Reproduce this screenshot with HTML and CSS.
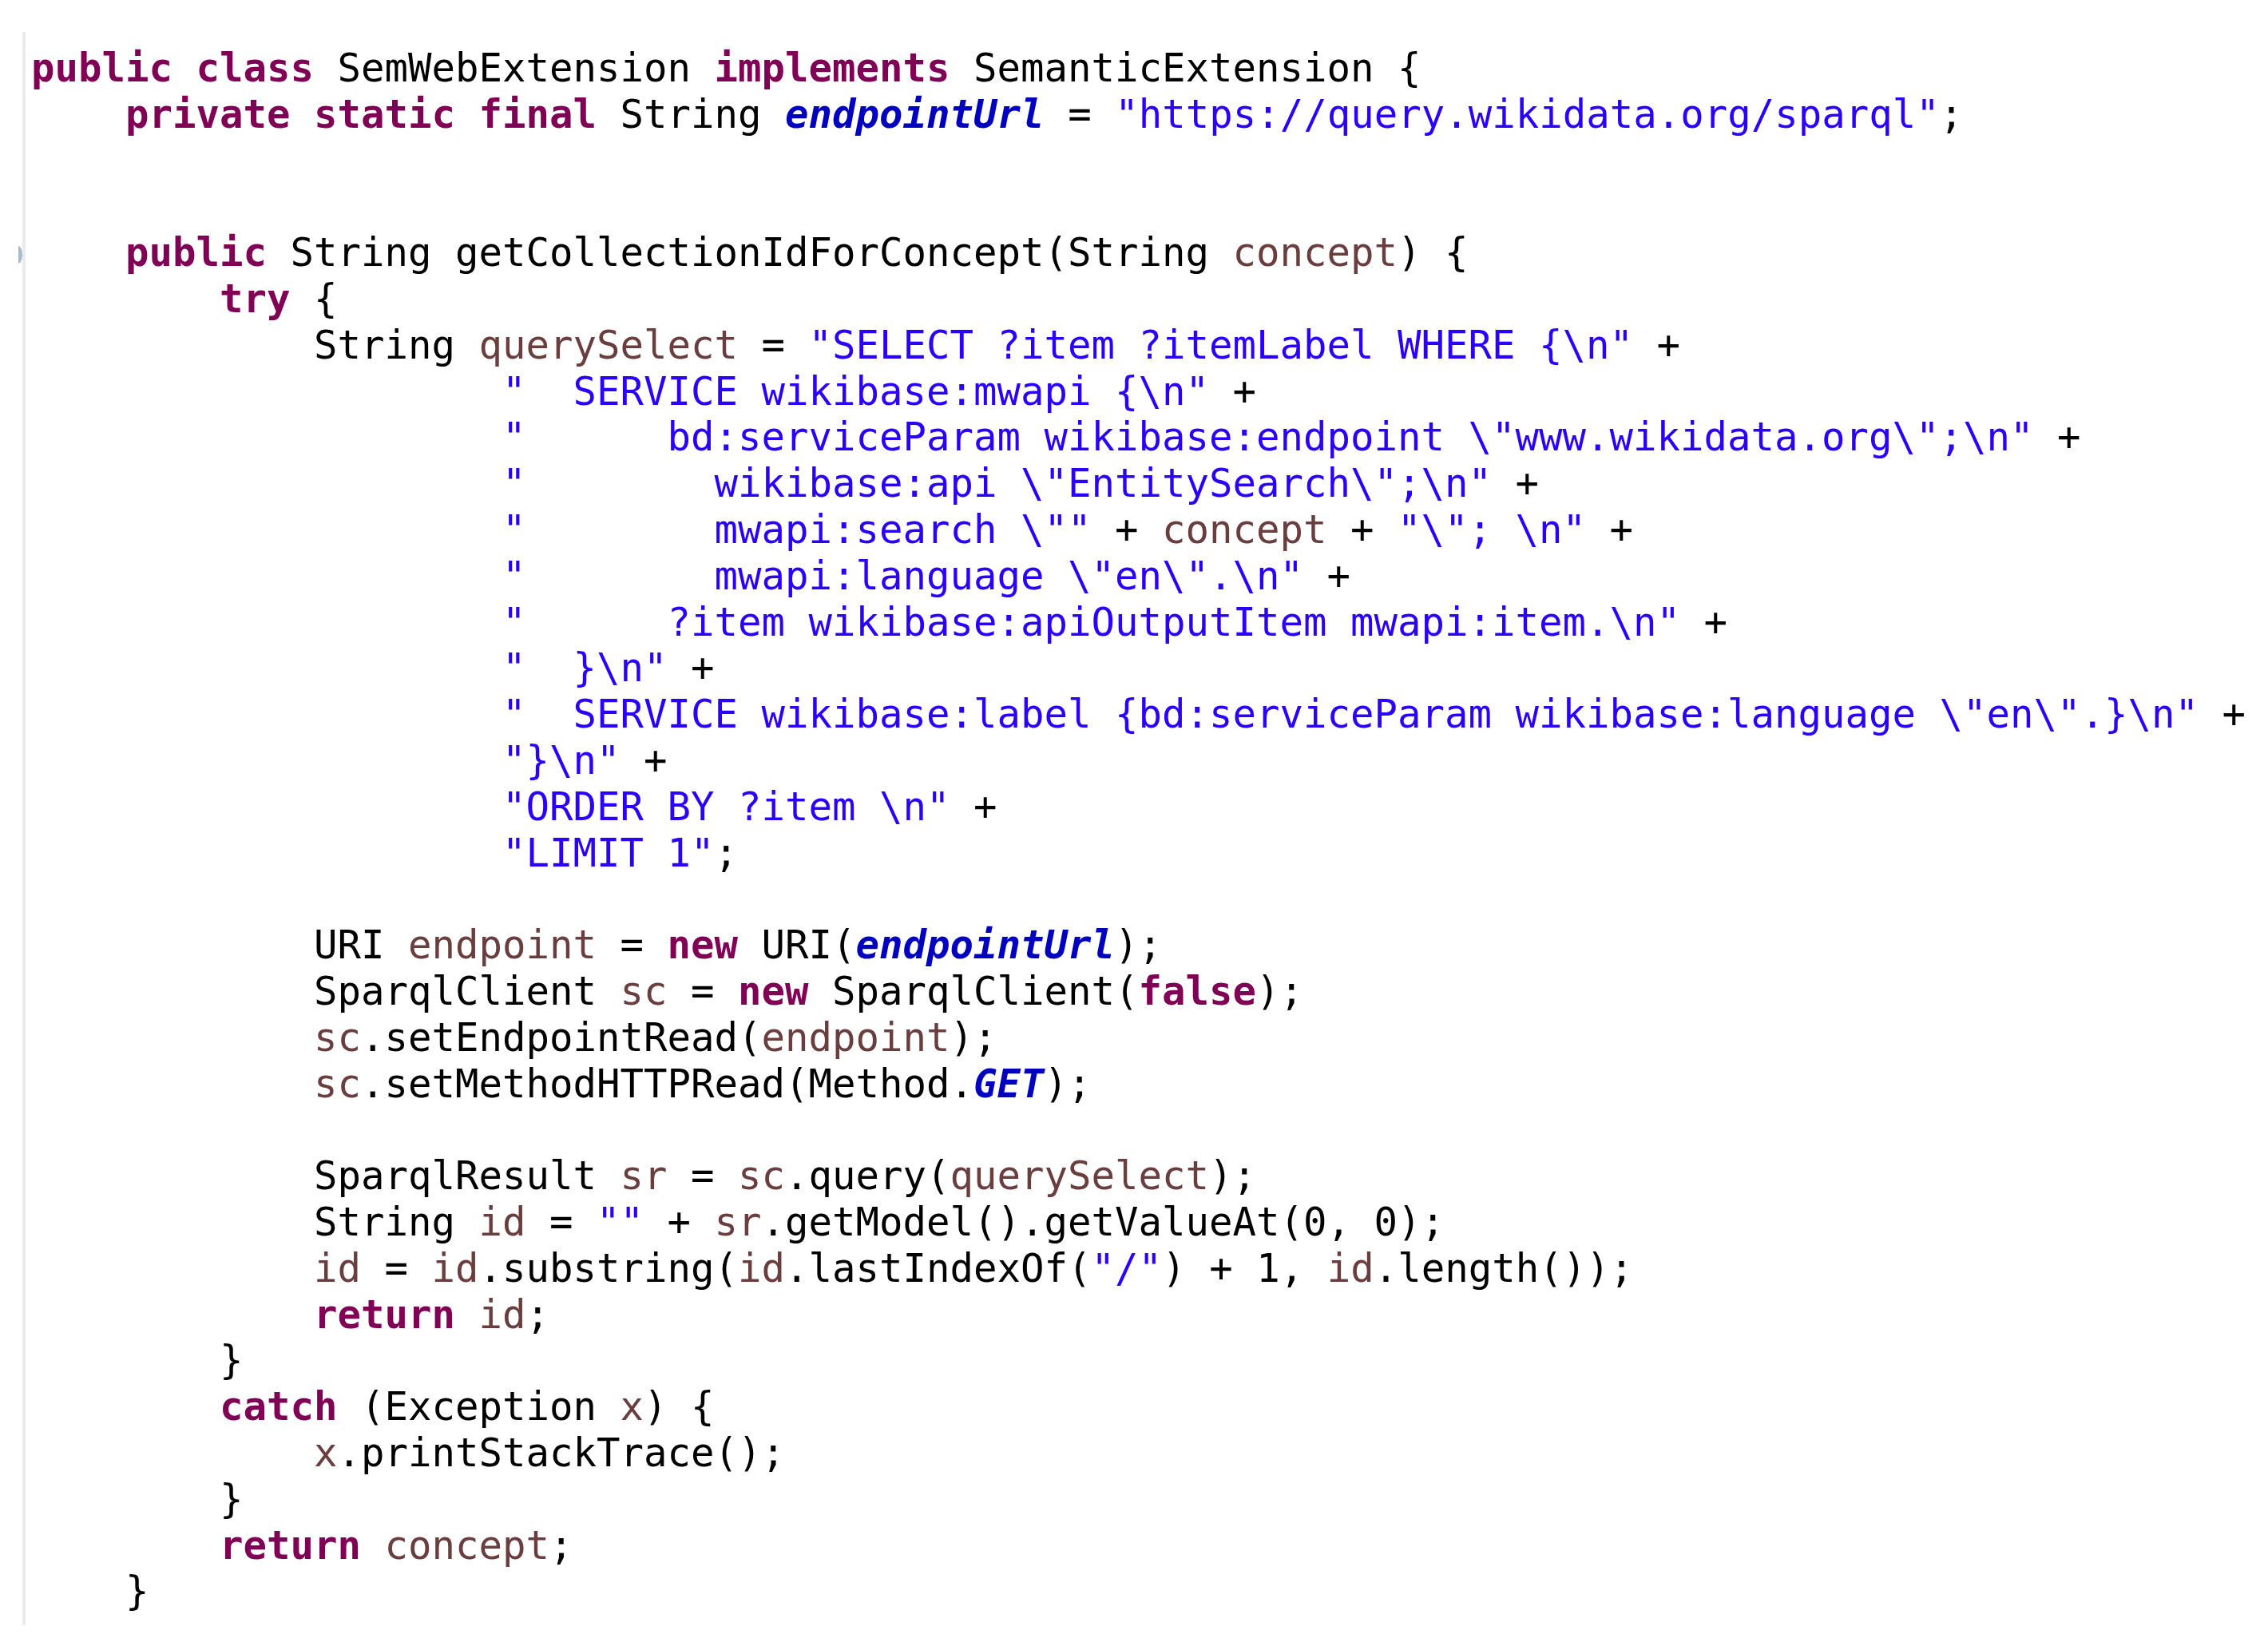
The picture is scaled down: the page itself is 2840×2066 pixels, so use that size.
FILE: index.html
```html
<!DOCTYPE html>
<html>
<head>
<meta charset="utf-8">
<link rel="stylesheet" href="styles.css">
</head>
<body>
<div class="editor">
  <div class="gutter"><div class="marker"></div></div>
  <div class="code">
<div class="ln"><span class="kw">public</span> <span class="kw">class</span> SemWebExtension <span class="kw">implements</span> SemanticExtension {</div>
<div class="ln">    <span class="kw">private</span> <span class="kw">static</span> <span class="kw">final</span> String <span class="sf">endpointUrl</span> = <span class="str">"https://query.wikidata.org/sparql"</span>;</div>
<div class="ln"> </div>
<div class="ln"> </div>
<div class="ln">    <span class="kw">public</span> String getCollectionIdForConcept(String <span class="var">concept</span>) {</div>
<div class="ln">        <span class="kw">try</span> {</div>
<div class="ln">            String <span class="var">querySelect</span> = <span class="str">"SELECT ?item ?itemLabel WHERE {\n"</span> +</div>
<div class="ln">                    <span class="str">"  SERVICE wikibase:mwapi {\n"</span> +</div>
<div class="ln">                    <span class="str">"      bd:serviceParam wikibase:endpoint \"www.wikidata.org\";\n"</span> +</div>
<div class="ln">                    <span class="str">"        wikibase:api \"EntitySearch\";\n"</span> +</div>
<div class="ln">                    <span class="str">"        mwapi:search \""</span> + <span class="var">concept</span> + <span class="str">"\"; \n"</span> +</div>
<div class="ln">                    <span class="str">"        mwapi:language \"en\".\n"</span> +</div>
<div class="ln">                    <span class="str">"      ?item wikibase:apiOutputItem mwapi:item.\n"</span> +</div>
<div class="ln">                    <span class="str">"  }\n"</span> +</div>
<div class="ln">                    <span class="str">"  SERVICE wikibase:label {bd:serviceParam wikibase:language \"en\".}\n"</span> +</div>
<div class="ln">                    <span class="str">"}\n"</span> +</div>
<div class="ln">                    <span class="str">"ORDER BY ?item \n"</span> +</div>
<div class="ln">                    <span class="str">"LIMIT 1"</span>;</div>
<div class="ln"> </div>
<div class="ln">            URI <span class="var">endpoint</span> = <span class="kw">new</span> URI(<span class="sf">endpointUrl</span>);</div>
<div class="ln">            SparqlClient <span class="var">sc</span> = <span class="kw">new</span> SparqlClient(<span class="kw">false</span>);</div>
<div class="ln">            <span class="var">sc</span>.setEndpointRead(<span class="var">endpoint</span>);</div>
<div class="ln">            <span class="var">sc</span>.setMethodHTTPRead(Method.<span class="sf">GET</span>);</div>
<div class="ln"> </div>
<div class="ln">            SparqlResult <span class="var">sr</span> = <span class="var">sc</span>.query(<span class="var">querySelect</span>);</div>
<div class="ln">            String <span class="var">id</span> = <span class="str">""</span> + <span class="var">sr</span>.getModel().getValueAt(0, 0);</div>
<div class="ln">            <span class="var">id</span> = <span class="var">id</span>.substring(<span class="var">id</span>.lastIndexOf(<span class="str">"/"</span>) + 1, <span class="var">id</span>.length());</div>
<div class="ln">            <span class="kw">return</span> <span class="var">id</span>;</div>
<div class="ln">        }</div>
<div class="ln">        <span class="kw">catch</span> (Exception <span class="var">x</span>) {</div>
<div class="ln">            <span class="var">x</span>.printStackTrace();</div>
<div class="ln">        }</div>
<div class="ln">        <span class="kw">return</span> <span class="var">concept</span>;</div>
<div class="ln">    }</div>
  </div>
</div>
</body>
</html>
```

FILE: styles.css
```css
html, body {
  margin: 0;
  padding: 0;
  background: #ffffff;
}

.editor {
  display: flex;
  align-items: stretch;
  padding-top: 40px;
  width: 2840px;
}

.gutter {
  width: 28px;
  flex: none;
  padding-top: 268px;
  box-sizing: border-box;
  display: flex;
  flex-direction: column;
  align-items: flex-end;
}

.marker {
  width: 5px;
  height: 22px;
  background: #a9bbd0;
  border-radius: 0 100% 100% 0 / 0 50% 50% 0;
}

.code {
  border-left: 4px solid #ebebeb;
  padding: 17px 0 13px 7px;
  font-family: "DejaVu Sans Mono", "Liberation Mono", monospace;
  font-size: 49px;
  line-height: 57.8px;
  color: #000000;
  flex: 1;
}

.ln {
  height: 57.8px;
  white-space: pre;
}

.kw {
  color: #7f0055;
  font-weight: bold;
}

.str {
  color: #2a00ff;
}

.var {
  color: #6a3e3e;
}

.sf {
  color: #0000c0;
  font-weight: bold;
  font-style: italic;
}
```
